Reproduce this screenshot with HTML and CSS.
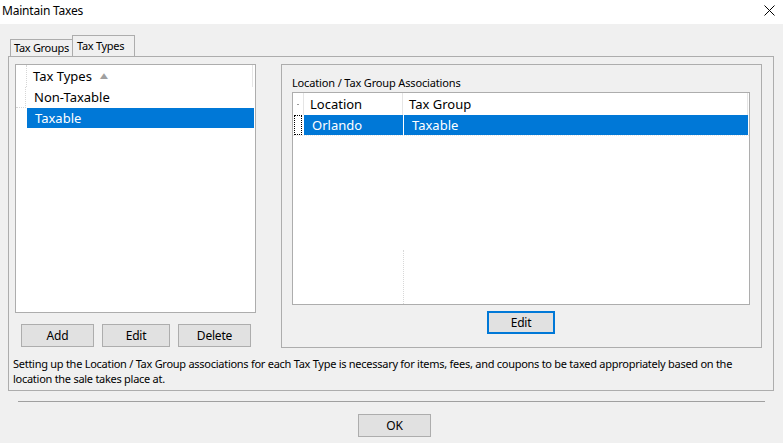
FILE: index.html
```html
<!DOCTYPE html>
<html>
<head>
<meta charset="utf-8">
<link rel="stylesheet" href="styles.css">
</head>
<body>
<div class="titlebar">
  <span class="title">Maintain Taxes</span>
  <svg class="close" width="11" height="11" viewBox="0 0 11 11"><path d="M0.5 0.5 L10.5 10.5 M10.5 0.5 L0.5 10.5" stroke="#000" stroke-width="1" fill="none"/></svg>
</div>
<div class="tabs">
  <div class="tab">Tax Groups</div>
  <div class="tab tab-active">Tax Types</div>
</div>
<div class="panel">
  <div class="main">
    <div class="leftcol">
      <div class="list">
        <div class="lrow lhead">
          <div class="lrh"></div>
          <div class="lcell">Tax Types <span class="sort">&#9650;</span></div>
        </div>
        <div class="lrow lrow1">
          <div class="lrh lrh-last"></div>
          <div class="lcell litem">Non-Taxable</div>
        </div>
        <div class="lrow lrow2">
          <div class="lrh blank"></div>
          <div class="lcell litem sel">Taxable</div>
        </div>
      </div>
      <div class="btnrow">
        <div class="btn w73">Add</div>
        <div class="btn w68">Edit</div>
        <div class="btn w73">Delete</div>
      </div>
    </div>
    <div class="groupbox">
      <div class="glabel">Location / Tax Group Associations</div>
      <div class="grid">
        <div class="grow ghead">
          <div class="grh"><span class="tick"></span></div>
          <div class="gc1">Location</div>
          <div class="gc2">Tax Group</div>
        </div>
        <div class="grow gsel">
          <div class="grh"><span class="focus"></span></div>
          <div class="gc1">Orlando</div>
          <div class="gc2">Taxable</div>
        </div>
        <div class="gfill"><div class="gfill-left"></div><div class="gfill-line"></div></div>
      </div>
      <div class="gbtns"><div class="btn w68 btn-focus">Edit</div></div>
    </div>
  </div>
  <div class="help">Setting up the Location / Tax Group associations for each Tax Type is necessary for items, fees, and coupons to be taxed appropriately based on the<br>location the sale takes place at.</div>
</div>
<div class="sep"></div>
<div class="okrow"><div class="btn w73">OK</div></div>
</body>
</html>
```
FILE: styles.css
```css
html, body {
  margin: 0;
  padding: 0;
}
body {
  width: 783px;
  height: 443px;
  background: #f0f0f0;
  font-family: "Noto Sans", "Open Sans", sans-serif;
  font-size: 11px;
  color: #000;
  overflow: hidden;
}
.titlebar {
  height: 24px;
  background: #fff;
  display: flex;
  align-items: center;
  justify-content: space-between;
  padding: 0 8px 0 2px;
  box-sizing: border-box;
}
.title {
  font-size: 12px;
  letter-spacing: -0.2px;
  margin-top: -4px;
}
.close {
  margin-top: -4px;
}
.tabs {
  display: flex;
  align-items: flex-end;
  margin: 11px 0 0 10px;
  height: 21px;
}
.tab {
  box-sizing: border-box;
  height: 17px;
  width: 62px;
  border: 1px solid #adadad;
  border-right: none;
  border-bottom: none;
  line-height: 16px;
  padding-left: 3px;
  font-size: 11px;
  letter-spacing: -0.3px;
  white-space: nowrap;
}
.tab-active {
  height: 21px;
  width: 63px;
  border-right: 1px solid #adadad;
  line-height: 19px;
  padding-left: 4px;
}
.panel {
  margin-left: 8px;
  width: 766px;
  height: 335px;
  box-sizing: border-box;
  border: 1px solid #adadad;
  padding: 7px 6px 0 6px;
}
.main {
  display: flex;
  align-items: flex-start;
}
.leftcol {
  width: 241px;
}
.list {
  box-sizing: border-box;
  width: 241px;
  height: 249px;
  background: #fff;
  border: 1px solid #adadad;
  font-size: 13px;
}
.lrow {
  display: flex;
}
.lhead { height: 22px; }
.lrow1 { height: 21px; }
.lrow2 { height: 20px; }
.lrh {
  width: 10px;
  border-right: 1px dotted #d6d6d6;
}
.lrh-last {
  border-bottom: 1px dotted #d6d6d6;
  box-sizing: border-box;
}
.lrh.blank {
  border-right: none;
  width: 11px;
}
.lcell {
  flex: 1;
  display: flex;
  align-items: center;
  padding-left: 6px;
  margin-right: 1px;
  line-height: 20px;
}
.lhead .lcell {
  border-right: 1px solid #e5e5e5;
  margin-right: 2px;
}
.lrow1 .lcell {
  margin-top: -2px;
}
.litem {
  padding-left: 8px;
}
.sel {
  background: #0078d7;
  color: #fff;
}
.sort {
  color: #a0a0a0;
  font-size: 10px;
  margin-left: 7px;
  margin-top: -2px;
  transform: scaleX(1.35);
  display: inline-block;
}
.btnrow {
  display: flex;
  gap: 8px;
  margin: 11px 0 0 6px;
}
.btn {
  box-sizing: border-box;
  height: 23px;
  background: #e1e1e1;
  border: 1px solid #adadad;
  display: flex;
  align-items: center;
  justify-content: center;
  font-size: 12px;
  letter-spacing: -0.2px;
}
.w73 { width: 73px; }
.w68 { width: 68px; }
.btn-focus {
  border: 2px solid #0078d7;
}
.groupbox {
  box-sizing: border-box;
  margin-left: 25px;
  width: 481px;
  height: 284px;
  border: 1px solid #adadad;
  padding: 10px 0 0 10px;
}
.glabel {
  height: 15px;
  line-height: 15px;
  font-size: 11px;
  letter-spacing: -0.15px;
}
.grid {
  box-sizing: border-box;
  margin-top: 2px;
  width: 458px;
  height: 213px;
  background: #fff;
  border: 1px solid #adadad;
  display: flex;
  flex-direction: column;
  font-size: 13px;
}
.grow {
  display: flex;
}
.ghead {
  height: 22px;
  line-height: 22px;
}
.gsel {
  height: 20px;
  line-height: 20px;
}
.grh {
  width: 10px;
  position: relative;
}
.ghead .grh {
  border-right: 1px solid #e5e5e5;
}
.gsel .grh {
  width: 11px;
}
.tick {
  position: absolute;
  left: 4px;
  top: 11px;
  width: 2px;
  height: 1px;
  background: #9a9a9a;
}
.focus {
  position: absolute;
  left: 1px;
  top: 0;
  width: 8px;
  height: 20px;
  box-sizing: border-box;
  border: 1px dotted #000;
}
.gc1 {
  width: 99px;
  padding-left: 6px;
  box-sizing: border-box;
  border-right: 1px solid #e5e5e5;
}
.gc2 {
  flex: 1;
  padding-left: 6px;
  margin-right: 1px;
  border-right: 1px solid #e5e5e5;
}
.gsel .gc1 {
  background: #0078d7;
  color: #fff;
  border-right: 1px solid #fff;
  padding-left: 8px;
  width: 100px;
}
.gsel .gc2 {
  background: #0078d7;
  color: #fff;
  border-right: none;
  padding-left: 8px;
}
.gfill {
  flex: 1;
  display: flex;
  border-top: 1px dotted #e8e8e8;
}
.gfill-left {
  width: 110px;
}
.gfill-line {
  margin-top: 114px;
  border-left: 1px dotted #d8d8d8;
}
.gbtns {
  width: 458px;
  display: flex;
  justify-content: center;
  margin-top: 6px;
}
.help {
  margin: 8px 0 0 -2px;
  line-height: 15px;
  font-size: 11px;
  letter-spacing: -0.27px;
  white-space: nowrap;
}
.sep {
  margin: 10px 0 0 18px;
  width: 747px;
  height: 1px;
  background: #a0a0a0;
}
.okrow {
  margin: 12px 0 0 358px;
}
```
